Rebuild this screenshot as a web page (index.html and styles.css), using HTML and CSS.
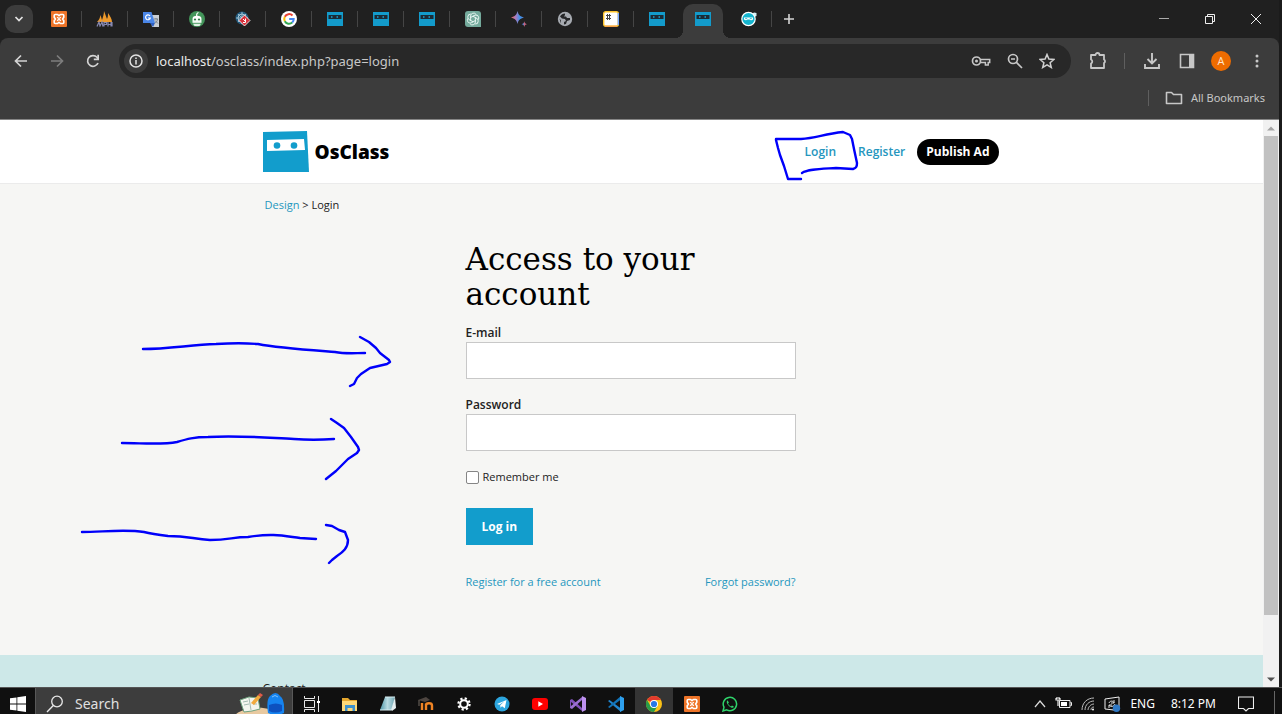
FILE: index.html
```html
<!DOCTYPE html>
<html lang="en">
<head>
<meta charset="utf-8">
<title>Login - OsClass</title>
<link rel="stylesheet" href="styles.css">
</head>
<body>
<svg class="defs" width="0" height="0" aria-hidden="true">
  <defs>
    <linearGradient id="spark" x1="0" x2="1" y1="0" y2="0"><stop offset="0" stop-color="#e8665f"/><stop offset=".3" stop-color="#a77bc0"/><stop offset=".55" stop-color="#3f93ea"/><stop offset=".75" stop-color="#4a86dc"/><stop offset=".85" stop-color="#d0647e"/><stop offset="1" stop-color="#c86a90"/></linearGradient>
    <linearGradient id="note" x1="0" x2="1"><stop offset="0" stop-color="#4f97a8"/><stop offset=".5" stop-color="#b9dbe2"/><stop offset="1" stop-color="#6fa6b3"/></linearGradient>
    <symbol id="xampp" viewBox="0 0 16 16"><rect width="16" height="16" rx="1" fill="#ee7428"/><path d="M4.200 3.500h2.300L8 4.700l1.500-1.200h2.300q1 0 1 1v1.700L11.600 8l1.200 1.800v1.700q0 1-1 1H9.500L8 11.300l-1.500 1.200H4.200q-1 0-1-1V9.800L4.400 8 3.200 6.200V4.500q0-1 1-1z" fill="none" stroke="#fff" stroke-width="1.600" stroke-linejoin="round"/><path d="M6.200 6.200Q8 8.600 9.800 6.200M6.200 9.800Q8 7.400 9.800 9.800" fill="none" stroke="#fff" stroke-width="1.200"/></symbol>
    <symbol id="ninja" viewBox="0 0 16 16"><path d="M0 1h16v14H0z" fill="#139bcb"/><path d="M1.500 4h13v4h-13z" fill="#1c2b36"/><path d="M4 5.300h1.500v1.400H4zM9.500 5.300H11v1.400H9.500z" fill="#1aa5d2"/></symbol>
  </defs>
</svg>

<div class="browser">
  <div class="tabstrip">
    <button class="tab-search" aria-label="Search tabs"><svg width="10" height="10" viewBox="0 0 10 10"><path d="M1.500 3l3.500 3.600L8.500 3" fill="none" stroke="#e3e3e3" stroke-width="1.700"/></svg></button>
    <div class="tab"><svg class="ico"><use href="#xampp"/></svg></div>
    <div class="tab"><svg class="ico wide" viewBox="0 0 18 16"><path d="M1 11c2-2 3-4 3.500-7L6 9c1-3 2-6 2-9l3 8c1-2 1-4 1-6 2 3 4 6 4 9z" fill="#ee9a2c"/><path d="M1 15.500l2-4.500 1 4 2-4 1 4.500M8 15.500v-4h2.500v2H8M12 11v4.500m0-2h3m0-2.500v4.500M16 11v4.500" fill="none" stroke="#8688b0" stroke-width="1.200"/></svg></div>
    <div class="tab"><svg class="ico" viewBox="0 0 16 16"><path d="M7 4h9v12H9z" fill="#c9ced4"/><path d="M0 1h8.500l3.500 11H0z" fill="#4a86e8"/><path d="M7 12h5l-2 4z" fill="#2c5fc4"/><path d="M7 5A2.400 2.400 0 1 0 7.300 7H5" fill="none" stroke="#fff" stroke-width="1.200"/><path d="M11 8h4M13 7v1M14.500 8c0 2-1.500 3.500-3 4.500M12 9.500l3 3" stroke="#78818a" fill="none"/></svg></div>
    <div class="tab"><svg class="ico" viewBox="0 0 16 16"><circle cx="8" cy="8" r="8" fill="#43955a"/><path d="M3.500 8a4.500 3.200 0 0 1 9 0z" fill="#fff"/><rect x="3.500" y="8" width="9" height="3.800" fill="#f2faf4"/><path d="M8 5.500C7 3.500 8 2 9.500 1.500" stroke="#fff" stroke-width="1.200" fill="none"/><circle cx="6" cy="8.500" r="1.100" fill="#2f7a46"/><circle cx="10" cy="8.500" r="1.100" fill="#2f7a46"/><path d="M4 12.700h8l-1.500 2.300h-5z" fill="#dff0e3"/></svg></div>
    <div class="tab"><svg class="ico" viewBox="0 0 16 16"><circle cx="7" cy="7" r="6.500" fill="#245d80"/><path d="M1 7h12M7 1v12M3 3l8 8M3 11l8-8" stroke="#a7c6d6" stroke-width=".9"/><circle cx="7" cy="7" r="4" fill="none" stroke="#a7c6d6"/><path d="M9.500 4l5.500 5.500-5.500 5.500L4 9.500z" fill="#d6303a" stroke="#fff" stroke-width=".8"/><path d="M8 8l3 3M10.500 7.500v4H8" fill="none" stroke="#fff"/></svg></div>
    <div class="tab"><svg class="ico" viewBox="0 0 16 16"><circle cx="8" cy="8" r="8" fill="#fff"/><g fill="none" stroke-width="2"><path d="M11.500 4.500A4.800 4.800 0 0 0 3.800 5.800" stroke="#ea4335"/><path d="M3.800 5.800a4.800 4.800 0 0 0 0 4.400" stroke="#fbbc05"/><path d="M3.800 10.200a4.800 4.800 0 0 0 7.400 1.400" stroke="#34a853"/><path d="M11.200 11.600A4.800 4.800 0 0 0 12.700 8H8.200" stroke="#4285f4"/></g></svg></div>
    <div class="tab"><svg class="ico"><use href="#ninja"/></svg></div>
    <div class="tab"><svg class="ico"><use href="#ninja"/></svg></div>
    <div class="tab"><svg class="ico"><use href="#ninja"/></svg></div>
    <div class="tab"><svg class="ico" viewBox="0 0 16 16"><path d="M3 0h10a3 3 0 0 1 3 3v13H3a3 3 0 0 1-3-3V3a3 3 0 0 1 3-3z" fill="#74aa9c"/><g fill="none" stroke="#eef9f6" stroke-width=".9"><path id="knot" d="M5.600 9.600V5a3 3 0 0 1 5.600-1.400"/><use href="#knot" transform="rotate(60 8 8)"/><use href="#knot" transform="rotate(120 8 8)"/><use href="#knot" transform="rotate(180 8 8)"/><use href="#knot" transform="rotate(240 8 8)"/><use href="#knot" transform="rotate(300 8 8)"/></g></svg></div>
    <div class="tab"><svg class="ico" viewBox="0 0 16 16"><path d="M6.500 0C7.300 3.700 9 5.600 13 6.500 9 7.500 7.300 9.300 6.500 13 5.700 9.300 4 7.500 0 6.500 4 5.600 5.700 3.700 6.500 0zM13.300 10.300c.4 1.800 1 2.500 2.700 3-1.700.4-2.300 1-2.700 2.700-.4-1.700-1-2.300-2.700-2.700 1.700-.5 2.300-1.200 2.700-3z" fill="url(#spark)"/></svg></div>
    <div class="tab"><svg class="ico" viewBox="0 0 16 16"><circle cx="8" cy="8" r="7.200" fill="#a6aab0"/><path d="M8 2.500c-2 0-4 1-5 3l2 2 3 .5 1 2-2 1v2.500l2-.5 1-3 3-1V7h-3l-1-1.500H7L8 4zM2.500 7.500l1.500 2v3z" fill="#252628"/></svg></div>
    <div class="tab"><svg class="ico" viewBox="0 0 16 16"><rect x=".7" y=".7" width="14.600" height="14.600" rx="2" fill="#fff" stroke="#ffc62c" stroke-width="1.400"/><path d="M15.300 2v12" stroke="#78a9ff" stroke-width="1.400"/><path d="M2 15.300h12" stroke="#f6a146" stroke-width="1.400"/><path d="M4.500 3v6M6.500 3v6M3 4.500h5M3 7.500h5" stroke="#444"/></svg></div>
    <div class="tab bare"><svg class="ico"><use href="#ninja"/></svg></div>
    <div class="tab bare active"><svg class="ico"><use href="#ninja"/></svg></div>
    <div class="tab"><svg class="ico" viewBox="0 0 16 16"><path d="M11 3l2-1.500 2.500.5v3L13 6z" fill="#d5f2f7"/><circle cx="7.500" cy="8" r="6.700" fill="#14b5cf" stroke="#fff" stroke-width="1.200"/><path d="M3 6.500h9v2q-2 1.500-3.500 0h-2q-1.500 1.500-3.500 0z" fill="#fff"/><path d="M4.200 7.600h2M8.800 7.600h2" stroke="#14a6bd" stroke-width=".8"/></svg></div>
    <button class="new-tab" aria-label="New tab"><svg width="12" height="12" viewBox="0 0 12 12"><path d="M6 1v10M1 6h10" stroke="#d4d4d4" stroke-width="1.600"/></svg></button>
    <div class="window-buttons">
      <button aria-label="Minimize"><svg width="12" height="12"><path d="M1 5.500h10" stroke="#aaa"/></svg></button>
      <button aria-label="Restore"><svg width="12" height="12" fill="none" stroke="#eee"><path d="M1.500 3.500h7v7h-7zM3.500 3V1.500h7v7H9"/></svg></button>
      <button aria-label="Close"><svg width="12" height="12"><path d="M1 1l10 10M11 1L1 11" stroke="#eee"/></svg></button>
    </div>
  </div>

  <div class="toolbar">
    <button class="nav" aria-label="Back"><svg width="16" height="16" viewBox="0 0 16 16"><path d="M14 8H3M8 2.500L2.500 8 8 13.500" fill="none" stroke="#d4d4d4" stroke-width="1.700"/></svg></button>
    <button class="nav" aria-label="Forward"><svg width="16" height="16" viewBox="0 0 16 16"><path d="M2 8h11M8 2.500L13.500 8 8 13.500" fill="none" stroke="#7d7d7d" stroke-width="1.700"/></svg></button>
    <button class="nav" aria-label="Reload"><svg width="16" height="16" viewBox="0 0 16 16"><path d="M13 10A5.400 5.400 0 1 1 12 4.300l1.500 1.500" fill="none" stroke="#d4d4d4" stroke-width="1.700"/><path d="M14 1.800v5.400H8.800V5.500h3.500V1.800z" fill="#d4d4d4"/></svg></button>
    <div class="omnibox">
      <span class="site-info"><svg width="14" height="14" viewBox="0 0 14 14"><circle cx="7" cy="7" r="6" fill="none" stroke="#e3e3e3" stroke-width="1.500"/><path d="M7 6v4.500M7 3.500V5" stroke="#e3e3e3" stroke-width="1.500"/></svg></span>
      <span class="url"><span class="host">localhost</span>/osclass/index.php?page=login</span>
      <svg width="20" height="16" viewBox="0 0 20 16"><circle cx="5.500" cy="8" r="4" fill="none" stroke="#c7c7c7" stroke-width="1.700"/><circle cx="5.500" cy="8" r="1.500" fill="#c7c7c7"/><path d="M9.200 6.600h9.500v2.800h-1.500V12h-2.800V9.400H9.200" fill="none" stroke="#c7c7c7" stroke-width="1.500"/></svg>
      <svg width="16" height="16" viewBox="0 0 16 16"><circle cx="6" cy="6" r="4.500" fill="none" stroke="#c7c7c7" stroke-width="1.700"/><path d="M9.200 9.200l5.800 5.800M4 6h4" stroke="#c7c7c7" stroke-width="1.700"/></svg>
      <svg width="16" height="16" viewBox="0 0 16 16"><path d="M8 1.500l1.900 4.600 5 .4-3.800 3.200 1.200 4.800L8 11.900l-4.300 2.600 1.200-4.800L1.100 6.500l5-.4z" fill="none" stroke="#d0d0d0" stroke-width="1.500"/></svg>
    </div>
    <div class="actions">
      <svg width="20" height="20" viewBox="0 0 20 20"><path d="M3 4h4.500a2 2 0 0 1 4 0H16v4.500a2 2 0 0 1 0 3.500v5H3v-4.500a2.200 2.200 0 0 0 0-4z" fill="none" stroke="#c7c7c7" stroke-width="1.800" stroke-linejoin="round"/></svg>
      <span class="rule"></span>
      <svg class="dl" width="18" height="18" viewBox="0 0 18 18"><path d="M9 1v10M4.500 7L9 11.500 13.500 7M2 12v4h14v-4" fill="none" stroke="#c7c7c7" stroke-width="1.900"/></svg>
      <svg width="16" height="16" viewBox="0 0 16 16"><path d="M1.500 1.500h13v13h-13z" fill="none" stroke="#c7c7c7" stroke-width="1.600"/><path d="M10 1.500h5v13h-5z" fill="#c7c7c7"/></svg>
      <span class="avatar">A</span>
      <svg class="more" width="4" height="16" fill="#c7c7c7"><circle cx="2" cy="3" r="1.500"/><circle cx="2" cy="8" r="1.500"/><circle cx="2" cy="13" r="1.500"/></svg>
    </div>
  </div>

  <div class="bookmarks">
    <span class="rule"></span>
    <svg width="18" height="14" viewBox="0 0 18 14"><path d="M1.500 1.500h5L8.500 3.500h8v9h-15z" fill="none" stroke="#c7c7c7" stroke-width="1.600" stroke-linejoin="round"/></svg>
    <span>All Bookmarks</span>
  </div>
</div>

<div class="viewport">
  <div class="page">
    <header class="site-header">
      <div class="container">
        <a class="logo" href="#"><svg width="46" height="41" viewBox="0 0 46 41"><path d="M0 1l44-1 2 41H0z" fill="#129dcc"/><path d="M4 9l37-1 1 11-38 1z" fill="#fff"/><circle cx="14" cy="14.500" r="3.300" fill="#129dcc"/><circle cx="31" cy="14.500" r="3.300" fill="#129dcc"/></svg><span>OsClass</span></a>
        <nav class="user-nav"><a href="#">Login</a><a href="#">Register</a><a class="publish" href="#">Publish Ad</a></nav>
      </div>
    </header>
    <main class="content">
      <div class="breadcrumb"><a href="#">Design</a> &gt; Login</div>
      <form class="login">
        <h1>Access to your account</h1>
        <label class="field-label" for="email">E-mail</label>
        <input class="field" id="email" type="text">
        <label class="field-label" for="password">Password</label>
        <input class="field" id="password" type="password">
        <div class="remember"><input id="remember" type="checkbox"><label for="remember">Remember me</label></div>
        <button class="submit" type="button">Log in</button>
        <div class="links"><a href="#">Register for a free account</a><a href="#">Forgot password?</a></div>
      </form>
    </main>
    <footer class="site-footer"><div class="container"><a href="#">Contact</a></div></footer>
  </div>
  <div class="scrollbar">
    <span class="arrow"><svg width="8" height="5"><path d="M0 4.500L4 .5l4 4z" fill="#a3a3a3"/></svg></span>
    <span class="thumb"></span><span class="track"></span>
    <span class="arrow"><svg width="8" height="5"><path d="M0 .5l4 4 4-4z" fill="#505050"/></svg></span>
  </div>
</div>

<div class="taskbar">
  <button class="start" aria-label="Start"><svg width="16" height="16" viewBox="0 0 16 16" fill="#fff"><path d="M0 2.300L6.500 1.400v6.200H0zM7.300 1.300L16 0v7.600H7.300zM0 8.400h6.500v6.200L0 13.700zM7.300 8.400H16V16l-8.700-1.300z"/></svg></button>
  <button class="search">
    <svg width="18" height="18" viewBox="0 0 18 18"><circle cx="11" cy="6.500" r="5.300" fill="none" stroke="#e8e8e8" stroke-width="1.300"/><path d="M7.300 10.500L1 17" stroke="#e8e8e8" stroke-width="1.400"/></svg>
    <span>Search</span>
    <svg class="school" width="58" height="24" viewBox="0 0 58 24"><path d="M0 24c10-11 38-11 50 0z" fill="#e8c9a0"/><path d="M6 8l9-3 9 1 2 11-8 2-8 1z" fill="#f3f5ee" stroke="#6ea27f"/><path d="M15 6l2 12M9 10l5-1M10 13l5-1M19 9h3M19 12h4" stroke="#a5bbb2"/><path d="M17 11l7-8 3 2-7 8z" fill="#f2aa3c"/><path d="M24 3l2-2 3 2-2 2z" fill="#e05a48"/><path d="M36 4q6-6 10 0 5 3 4 17-8 4-16 0-2-13 2-17z" fill="#1684f0"/><path d="M35 13q7-3 13 0v6q-7 3-13 0z" fill="#0d51bf"/><path d="M38 5q3-3 6 0" stroke="#7cc1ff" fill="none"/></svg>
  </button>
  <div class="apps">
    <button aria-label="Task View"><svg class="ico" viewBox="0 0 16 16" fill="none" stroke="#e8e8e8"><path d="M.5 0v2.500h10V0M.5 4.500h10v7H.5zM.5 16v-2.500h10V16M14.500 0v16"/><path d="M13 5h3v2h-3z" fill="#fff" stroke="none"/></svg></button>
    <button aria-label="File Explorer"><svg class="ico" viewBox="0 0 16 16"><path d="M0 2h6l2 2h7v11H0z" fill="#e5a72e"/><path d="M0 5h15v10H0z" fill="#ffd978"/><path d="M3 15V9h10v6h-2.500v-3h-5v3z" fill="#3e92cd"/></svg></button>
    <button aria-label="Notepad"><svg class="ico" viewBox="0 0 16 16"><path d="M5 1h10l-3 13H0z" fill="url(#note)"/><path d="M15 1l1 11-4 3-1-1z" fill="#e4eef0"/><path d="M5 1h10M0 14h11" stroke="#d8eef2"/></svg></button>
    <button aria-label="Moodle"><svg class="ico" viewBox="0 0 16 16"><path d="M0 4l8-3 4 3-5 2z" fill="#4d4540"/><path d="M1 4v6" stroke="#716860"/><path d="M4 14V7M8 14V7.500M8 9.500c0-3 6-3 6 0V14" fill="none" stroke="#f08424" stroke-width="2.400"/></svg></button>
    <button aria-label="Settings"><svg class="ico small" viewBox="0 0 14 14"><circle cx="7" cy="7" r="3.800" fill="none" stroke="#fff" stroke-width="2"/><circle cx="7" cy="7" r="5.600" fill="none" stroke="#fff" stroke-width="2.200" stroke-dasharray="2.200 2.198"/></svg></button>
    <button aria-label="Telegram"><svg class="ico" viewBox="0 0 16 16"><circle cx="8" cy="8" r="7.500" fill="#2ca5de"/><path d="M3 8l9.500-4-1.700 8.300-2.800-2-1.500 1.500-.3-2.600 4-3.700-5 3.200z" fill="#fff"/></svg></button>
    <button aria-label="YouTube"><svg class="ico" viewBox="0 0 16 16"><rect y="2" width="16" height="12" rx="3" fill="#f00"/><path d="M6.300 5.300v5.400L11 8z" fill="#fff"/></svg></button>
    <button aria-label="Visual Studio"><svg class="ico" viewBox="0 0 16 16"><path d="M0 4l2-1 10 9v3L1 6v6H0z" fill="#8152ba"/><path d="M0 12l2 1L12 4V1L1 10z" fill="#9b70d1"/><path d="M12 0l4 2v12l-4 2z" fill="#bd91ef"/></svg></button>
    <button aria-label="VS Code"><svg class="ico" viewBox="0 0 16 16"><path d="M0 5l1.500-1L13 12.500V16z" fill="#2186cf"/><path d="M0 11l1.500 1L13 3.500V0z" fill="#1273b8"/><path d="M12 0l4 2v12l-4 2z" fill="#2ea0ee"/></svg></button>
    <button class="current" aria-label="Chrome"><svg class="ico" viewBox="0 0 16 16"><circle cx="8" cy="8" r="8" fill="#fbc116"/><path d="M8 8L1.070 4A8 8 0 0 1 14.930 4H8z" fill="#e33b2e"/><path d="M1.070 4A8 8 0 0 0 8 16l3.500-6H4.500z" fill="#289b4a"/><circle cx="8" cy="8" r="4" fill="#fff"/><circle cx="8" cy="8" r="3.100" fill="#2678e7"/></svg></button>
    <button aria-label="XAMPP"><svg class="ico"><use href="#xampp"/></svg></button>
    <button aria-label="WhatsApp"><svg class="ico" viewBox="0 0 16 16"><path d="M1 15l1-3.800a6.700 6.700 0 1 1 2.700 2.700z" fill="none" stroke="#2fd36b" stroke-width="1.500"/><path d="M5.500 4.300c-1.600 1.600-.3 4 1.500 5.700s4 2.600 5 .8L10 9.500l-1 1C7.800 10 6.500 8.800 6 7.500l.9-1z" fill="#2fd36b"/></svg></button>
  </div>
  <div class="tray">
    <svg width="12" height="12"><path d="M1 9l5-6 5 6" fill="none" stroke="#ddd" stroke-width="1.200"/></svg>
    <svg width="17" height="16" viewBox="0 0 17 16"><path d="M4.500 4.500H15v7H4.500zM15.500 6.500h1v3h-1" fill="none" stroke="#eee"/><path d="M6 6h6v4H6z" fill="#fff"/><path d="M1 2v2h4V2M2 1v2M4 1v2M3 4v6" stroke="#eee" stroke-width="1.200" fill="none"/></svg>
    <svg width="14" height="14" fill="none" stroke="#bbb"><path d="M1 13C1 6 6 1 13 1M4 13c0-5 4-9 9-9M7 13c0-3 3-6 6-6M10 13c0-2 1-3 3-3"/><circle cx="12" cy="12.500" r="1" fill="#fff" stroke="none"/></svg>
    <svg width="17" height="16" viewBox="0 0 17 16"><path d="M1 3l14-2v10M10 14L1 13V3" fill="none" stroke="#eee"/><path d="M5 7c1-3 5-2 5 0M10 4v3H7M11 8c-1 3-5 3-6 1M5 12V9h3" fill="none" stroke="#ddd"/><circle cx="12.500" cy="12.300" r="3.700" fill="#2f78c4"/></svg>
    <span class="lang">ENG</span>
    <span class="clock">8:12 PM</span>
    <svg width="16" height="16" viewBox="0 0 16 16"><path d="M.5 1h15v11.500h-5L8 15l-2.500-2.500h-5z" fill="none" stroke="#eee" stroke-width="1.100"/></svg>
    <span class="peek"></span>
  </div>
</div>

<svg class="ink" width="1282" height="714" viewBox="0 0 1282 714" aria-hidden="true">
  <path d="M801 179h-13l-4-13-4-11-2-7-2-8v-1h25c15-1 23-5 42-7l7 3 2 4 2 10 3 14c0 4-1 5-4 6l-17-1c-16 1-28 1-34 5"/>
  <path d="M143 349c25 0 47-4 73-5 15-1 31-1 42 0 20 4 51 6 77 8 10 2 20 1 30 1M360 337l9 5 7 6 4 5 9 7 1 2-3 2-17 4-9 6-4 4-3 6-4 2"/>
  <path d="M122 443c20 0 40 2 55-1 10-3 17-5 31-5 31-2 62 1 86 2 13 1 26 1 40 0M331 419l6 4 7 5 7 9 7 10 1 3-2 3-9 6-12 12-10 8"/>
  <path d="M82 532c20 0 43-3 62 0 8 2 16 3 24 4 20 0 25 3 42 4 20 0 22-3 38-3 25-4 36-1 52 1l16 1M326 525l6 1 7 4 6 2 3 8c0 8-5 12-11 16l-5 4-3 3"/>
</svg>
</body>
</html>
```
FILE: styles.css
```css
* { box-sizing: border-box; }
body {
  margin: 0;
  height: 100vh;
  display: flex;
  flex-direction: column;
  overflow: hidden;
  position: relative;
  background: #111;
  font-family: "Open Sans", "Noto Sans", sans-serif;
}
button { border: 0; padding: 0; background: none; font: inherit; color: inherit; }
a { color: #2596be; text-decoration: none; }
svg { flex: none; display: block; }
.defs, .ink { position: absolute; left: 0; top: 0; pointer-events: none; }
.ink { fill: none; stroke: #0000fa; stroke-width: 2.4; stroke-linecap: round; stroke-linejoin: round; }
.ico { width: 16px; height: 16px; }
.ico.wide { width: 18px; }
.ico.small { width: 14px; height: 14px; }

.browser { background: #202020; border-right: 3px solid #1b1b1b; }
.tabstrip { height: 38px; display: flex; align-items: center; padding-left: 5px; }
.tab-search { width: 28px; height: 28px; border-radius: 10px; background: #3c3c3c; display: grid; place-items: center; margin-right: 3px; }
.tab {
  width: 46px; height: 38px; display: grid; place-items: center; position: relative;
  background: linear-gradient(#454545, #454545) right center / 1px 16px no-repeat;
}
.tab.bare { background: none; }
.tab.active::before {
  content: ""; position: absolute; left: 3px; right: 3px; top: 4px; bottom: 0;
  background: #3c3c3c; border-radius: 10px 10px 0 0;
}
.tab.active::after {
  content: ""; position: absolute; left: -5px; right: -5px; bottom: 0; height: 8px;
  background:
    radial-gradient(circle at 0 0, transparent 8px, #3c3c3c 8px) left / 8px 8px no-repeat,
    radial-gradient(circle at 100% 0, transparent 8px, #3c3c3c 8px) right / 8px 8px no-repeat;
}
.tab.active .ico { position: relative; z-index: 1; }
.new-tab { width: 34px; display: grid; place-items: center; }
.window-buttons { margin-left: auto; display: flex; }
.window-buttons button { width: 46px; height: 36px; display: grid; place-items: center; }

.toolbar {
  height: 46px; background: #3c3c3c; display: flex; align-items: center;
  padding: 0 20px 0 3px; border-radius: 8px 8px 0 0;
}
.nav { width: 36px; height: 34px; display: grid; place-items: center; }
.omnibox {
  flex: 1; height: 34px; margin-left: 8px; padding: 0 16px 0 5px;
  border-radius: 17px; background: #282828; display: flex; align-items: center; gap: 16px;
}
.site-info { width: 24px; height: 24px; border-radius: 12px; background: #3c3c3c; display: grid; place-items: center; }
.url { flex: 1; margin-left: -8px; font-family: "Noto Sans", sans-serif; font-size: 13px; line-height: 20px; color: #c7c7c7; }
.host { color: #e8e8e8; }
.actions { display: flex; align-items: center; gap: 16px; margin-left: 17px; }
.rule { width: 1px; height: 16px; background: #5f5f5f; }
.dl { margin: 0 2px; }
.avatar { width: 20px; height: 20px; border-radius: 10px; background: #ee6c00; color: #ffe5cc; font-size: 11px; line-height: 20px; text-align: center; }
.more { margin-left: 8px; }
.bookmarks {
  height: 36px; background: #3c3c3c; border-bottom: 1px solid #858585;
  display: flex; align-items: center; justify-content: flex-end; gap: 8px;
  padding: 0 14px 8px 0; font-family: "Noto Sans", sans-serif; font-size: 11px; line-height: 16px; color: #c7c7c7;
}
.bookmarks .rule { margin-right: 8px; }

.viewport { flex: 1; min-height: 0; display: flex; border-right: 3px solid #1b1b1b; }
.page { flex: 1; overflow: hidden; background: #f6f6f4; color: #222; padding-right: 2px; }
.container { max-width: 736px; margin: 0 auto; }
.site-header { background: #fff; border-bottom: 1px solid #ebebeb; margin-right: -2px; padding-right: 2px; }
.site-header .container { height: 63px; display: flex; align-items: center; justify-content: space-between; }
.logo { display: flex; align-items: center; gap: 6px; color: #000; font: 900 19px/24px "Noto Sans", sans-serif; }
.user-nav { display: flex; align-items: center; gap: 22px; padding-top: 1px; font-size: 12px; line-height: 16px; font-weight: 600; }
.user-nav .publish { margin-left: -10px; padding: 5px 9px; border-radius: 13px; background: #000; color: #fff; font-weight: 700; }
.content { padding-bottom: 65px; }
.breadcrumb { max-width: 732px; margin: 0 auto; padding-top: 13px; font-size: 11px; line-height: 16px; }
.login { width: 330px; margin: 29px auto 0; }
h1 { margin: 0 0 12px; font: 400 31px/35px "DejaVu Serif", serif; color: #000; }
.field-label { display: block; font-size: 12px; line-height: 18px; font-weight: 600; }
.field { display: block; width: 100%; height: 37px; margin: 0 0 17px; border: 1px solid #c8c8c8; padding: 0 8px; background: #fff; font-size: 14px; }
.remember { display: flex; align-items: center; gap: 4px; padding-top: 1px; font-size: 11px; line-height: 16px; }
.remember input { appearance: none; width: 13px; height: 13px; margin: 0; border: 1px solid #858585; border-radius: 2px; background: #fff; }
.submit { display: block; height: 37px; margin-top: 23px; padding: 0 16px; background: #129dcc; color: #fff; font-size: 12px; font-weight: 700; }
.links { display: flex; justify-content: space-between; margin-top: 29px; font-size: 11px; line-height: 16px; }
.site-footer { background: #cde8e8; padding: 26px 2px 0 0; height: 120px; margin-right: -2px; }
.site-footer a { color: #222; font-size: 12px; line-height: 16px; display: block; }

.scrollbar { width: 16px; background: #f1f1f1; display: flex; flex-direction: column; }
.arrow { height: 16px; display: grid; place-items: center; }
.thumb { flex: 479; margin: 0 1px; background: #c1c1c1; }
.track { flex: 56; }

.taskbar { height: 27px; background: #101010; border-top: 1px solid #555; display: flex; color: #fff; font-family: "Noto Sans", sans-serif; }
.taskbar button, .tray { display: flex; align-items: center; justify-content: center; padding-top: 6px; }
.start { width: 35px; }
.taskbar .search { width: 258px; background: #3d3d3d; border: 1px solid #585858; border-width: 0 1px; justify-content: flex-start; padding-left: 10px; gap: 11px; font-size: 14px; line-height: 20px; color: #e0e0e0; }
.school { margin-left: auto; }
.apps { display: flex; }
.apps button { width: 38px; }
.apps .current { background: #343434; }
.tray { margin-left: auto; gap: 9px; font-size: 12px; line-height: 16px; }
.clock { margin: 0 13px 0 7px; }
.peek { width: 1px; height: 26px; margin: 0 7px 0 11px; background: #666; }
```
